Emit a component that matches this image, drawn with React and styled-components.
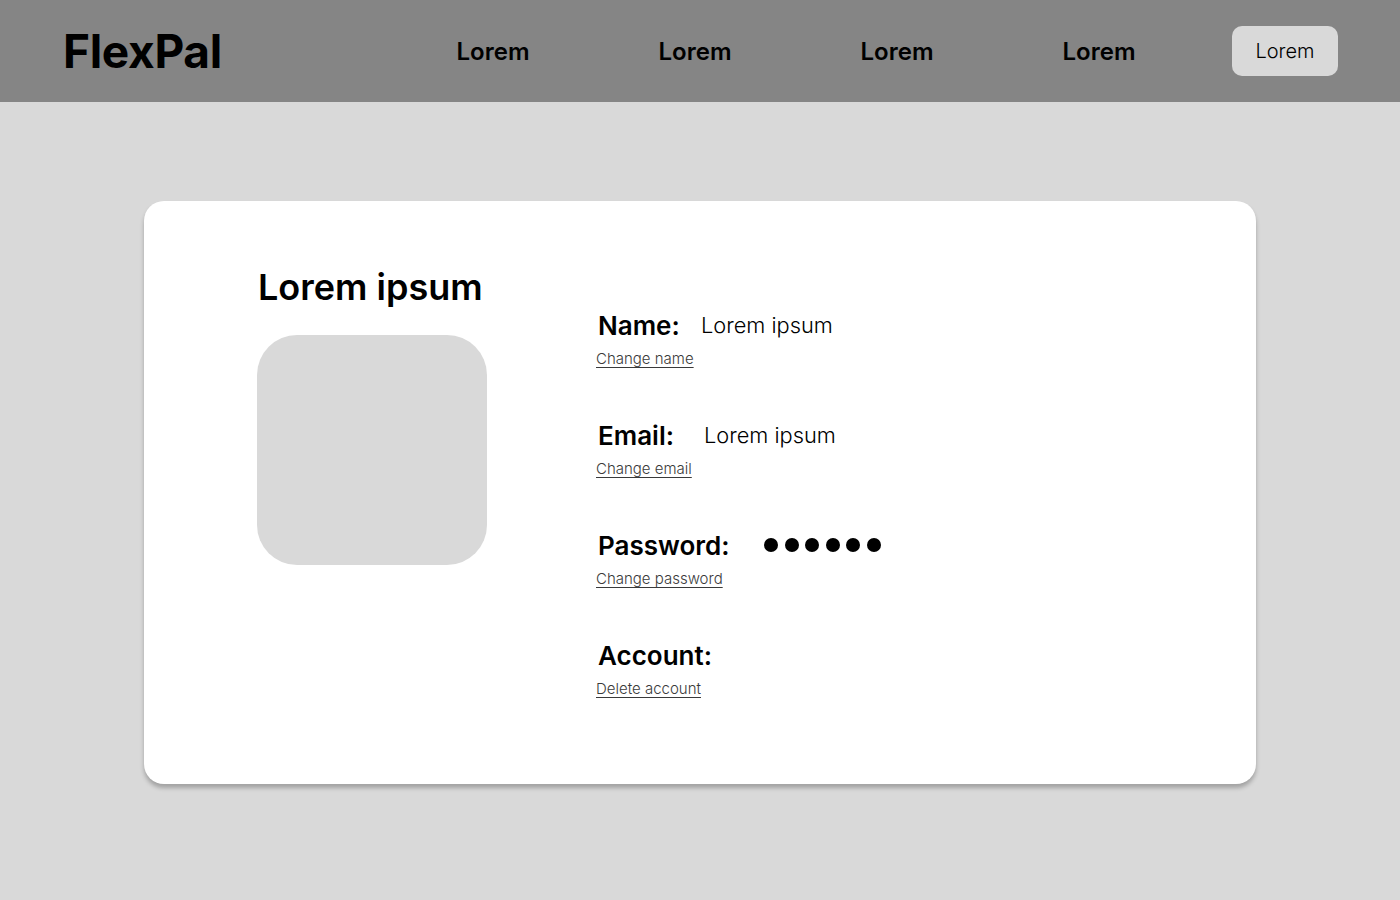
import React from 'react';
import styled, { createGlobalStyle } from 'styled-components';

const Global = createGlobalStyle`
  html, body {
    margin: 0;
    padding: 0;
    background: #d9d9d9;
    font-family: Inter, "Noto Sans", sans-serif;
    color: #000;
  }
`;

const Page = styled.div`
  width: 1400px;
  min-height: 900px;
  background: #d9d9d9;
`;

const Header = styled.header`
  height: 102px;
  background: #858585;
  display: flex;
  align-items: center;
  padding: 0 62px 0 63px;
  box-sizing: border-box;
`;

const Logo = styled.div`
  font-size: 46px;
  font-weight: 700;
  letter-spacing: -0.3px;
  width: 329px;
`;

const Nav = styled.nav`
  display: flex;
  align-items: center;
`;

const NavItem = styled.a`
  width: 202px;
  text-align: center;
  font-size: 24px;
  font-weight: 600;
  color: #000;
`;

const NavButton = styled.button`
  margin-left: 32px;
  width: 106px;
  height: 50px;
  border: none;
  border-radius: 10px;
  background: #d9d9d9;
  font-family: inherit;
  font-size: 20px;
  font-weight: 300;
  color: #000;
`;

const Card = styled.main`
  width: 1112px;
  height: 583px;
  margin: 99px auto 0;
  background: #fff;
  border-radius: 20px;
  box-shadow: 0 4px 4px rgba(0, 0, 0, 0.25);
  display: flex;
  align-items: flex-start;
  padding: 64px 0 0 113px;
  box-sizing: border-box;
`;

const Left = styled.section`
  width: 230px;
  display: flex;
  flex-direction: column;
`;

const Title = styled.h1`
  margin: 0 0 26px 1px;
  font-size: 36px;
  font-weight: 600;
  line-height: 44px;
`;

const Avatar = styled.div`
  width: 230px;
  height: 230px;
  border-radius: 40px;
  background: #d9d9d9;
`;

const Right = styled.section`
  margin-left: 109px;
  padding-top: 44px;
  display: flex;
  flex-direction: column;
`;

const Field = styled.div`
  height: 110px;
  flex-shrink: 0;
  display: flex;
  flex-direction: column;
  align-items: flex-start;
`;

const FieldLine = styled.div`
  display: flex;
  align-items: center;
  height: 32px;
  padding-left: 2px;
`;

const Label = styled.span`
  font-size: 26px;
  font-weight: 600;
  width: ${p => p.$w}px;
`;

const Value = styled.span`
  font-size: 21.8px;
  font-weight: 300;
`;

const Dots = styled.div`
  display: flex;
  gap: 6.5px;
`;

const Dot = styled.span`
  width: 14px;
  height: 14px;
  border-radius: 50%;
  background: #000;
`;

const Link = styled.a`
  margin-top: 9px;
  font-size: 15px;
  font-weight: 300;
  line-height: 18px;
  color: #3a3a3a;
  text-decoration: underline;
  text-underline-offset: 3px;
  text-decoration-thickness: 1px;
`;

const fields = [
  { label: 'Name:', w: 103, value: 'Lorem ipsum', link: 'Change name' },
  { label: 'Email:', w: 106, value: 'Lorem ipsum', link: 'Change email' },
  { label: 'Password:', w: 166, dots: 6, link: 'Change password' },
  { label: 'Account:', w: 140, link: 'Delete account' },
];

export default function App() {
  return (
    <Page>
      <Global />
      <Header>
        <Logo>FlexPal</Logo>
        <Nav>
          <NavItem>Lorem</NavItem>
          <NavItem>Lorem</NavItem>
          <NavItem>Lorem</NavItem>
          <NavItem>Lorem</NavItem>
        </Nav>
        <NavButton>Lorem</NavButton>
      </Header>
      <Card>
        <Left>
          <Title>Lorem ipsum</Title>
          <Avatar />
        </Left>
        <Right>
          {fields.map(f => (
            <Field key={f.label}>
              <FieldLine>
                <Label $w={f.w}>{f.label}</Label>
                {f.value && <Value>{f.value}</Value>}
                {f.dots && (
                  <Dots>
                    {Array.from({ length: f.dots }).map((_, i) => <Dot key={i} />)}
                  </Dots>
                )}
              </FieldLine>
              <Link>{f.link}</Link>
            </Field>
          ))}
        </Right>
      </Card>
    </Page>
  );
}
